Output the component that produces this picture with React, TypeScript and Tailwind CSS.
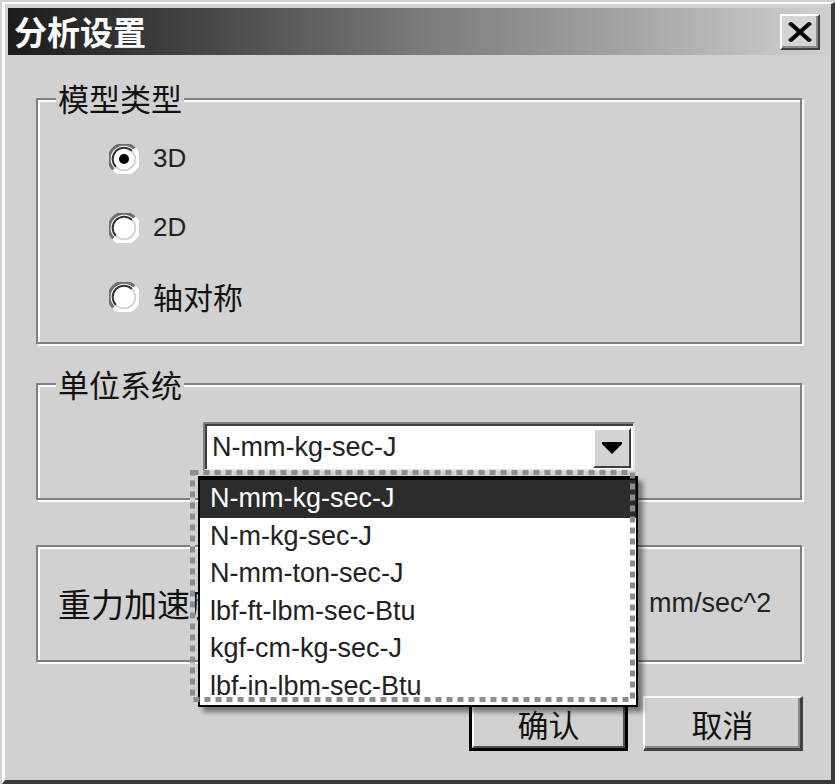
import React from "react";

const CJK = "font-['Noto_Sans_CJK_SC','Noto_Sans',sans-serif]";
const LAT = "font-['Liberation_Sans','Noto_Sans_CJK_SC',sans-serif]";

function Radio({ checked }: { checked?: boolean }) {
  return (
    <svg width="30" height="30" viewBox="0 0 30 30" className="shrink-0">
      <circle cx="15" cy="15" r="14" fill="#ffffff" />
      <path d="M4.5 25.5 A14 14 0 0 1 25.5 4.5" fill="none" stroke="#6e6e6e" strokeWidth="3" />
      <path d="M7 23 A11 11 0 0 1 23 7" fill="none" stroke="#333333" strokeWidth="2" />
      <path d="M25.5 4.5 A14 14 0 0 1 4.5 25.5" fill="none" stroke="#ffffff" strokeWidth="3" />
      <path d="M23 7 A11 11 0 0 1 7 23" fill="none" stroke="#d6d6d6" strokeWidth="2" />
      {checked && <circle cx="15" cy="15" r="5" fill="#000" />}
    </svg>
  );
}

const items = [
  "N-mm-kg-sec-J",
  "N-m-kg-sec-J",
  "N-mm-ton-sec-J",
  "lbf-ft-lbm-sec-Btu",
  "kgf-cm-kg-sec-J",
  "lbf-in-lbm-sec-Btu",
];

export default function App() {
  return (
    <div className="relative w-[835px] h-[784px] bg-[#d1d1d1] pl-[2px] pt-[2px] overflow-hidden">
      <div className="h-[782px] flex flex-col border-t-2 border-l-[3px] border-t-white border-l-white border-r-4 border-b-4 border-r-[#3a3a3a] border-b-[#3a3a3a] pl-[3px] pt-[4px] pr-[4px]">
        {/* title bar */}
        <div className="h-[47px] flex items-center justify-between bg-gradient-to-r from-[#1c1c1c] via-[#7a7a7a] to-[#cfcfcf] pl-[6px] pr-[7px]">
          <span className={`${CJK} text-white font-bold text-[33px] leading-none`}>分析设置</span>
          <div className="w-[40px] h-[36px] bg-[#d4d4d4] border-t-2 border-l-2 border-t-white border-l-white border-r-2 border-b-2 border-r-[#404040] border-b-[#404040] shadow-[inset_-2px_-2px_0_#8a8a8a] flex items-center justify-center">
            <svg width="24" height="20" viewBox="0 0 24 20">
              <path d="M3 2 L21 18 M21 2 L3 18" stroke="#000" strokeWidth="4" strokeLinecap="square" />
            </svg>
          </div>
        </div>

        {/* group 1 */}
        <div className="relative ml-[28px] mt-[43px] w-[766px] h-[246px] border-2 border-[#808080] shadow-[inset_2px_2px_0_#ffffff,2px_2px_0_#ffffff] pl-[71px] pt-[24px]">
          <span className={`absolute left-[18px] top-[-18px] px-[2px] bg-[#d1d1d1] ${CJK} text-[31px] leading-[31px] text-[#111]`}>模型类型</span>
          <div className="flex flex-col">
            <div className="h-[69px] flex items-center gap-[14px]">
              <Radio checked />
              <span className={`${LAT} text-[26px] text-[#222]`}>3D</span>
            </div>
            <div className="h-[69px] flex items-center gap-[14px]">
              <Radio />
              <span className={`${LAT} text-[26px] text-[#222]`}>2D</span>
            </div>
            <div className="h-[69px] flex items-center gap-[14px]">
              <Radio />
              <span className={`${CJK} text-[30px] text-[#111]`}>轴对称</span>
            </div>
          </div>
        </div>

        {/* group 2 */}
        <div className="relative ml-[28px] mt-[39px] w-[766px] h-[117px] border-2 border-[#808080] shadow-[inset_2px_2px_0_#ffffff,2px_2px_0_#ffffff] pl-[165px] pt-[37px]">
          <span className={`absolute left-[18px] top-[-17px] px-[2px] bg-[#d1d1d1] ${CJK} text-[31px] leading-[31px] text-[#111]`}>单位系统</span>
          <div className="w-[432px] h-[49px] bg-white border-t-2 border-l-2 border-t-[#808080] border-l-[#808080] border-r-2 border-b-2 border-r-[#e8e8e8] border-b-[#e8e8e8] shadow-[inset_2px_2px_0_#404040] flex items-center justify-between pl-[7px] pr-[2px] pt-[2px]">
            <span className={`${LAT} text-[27px] text-[#222] leading-none`}>N-mm-kg-sec-J</span>
            <div className="w-[38px] h-[40px] bg-[#d4d4d4] border-t-2 border-l-2 border-t-white border-l-white border-r-2 border-b-2 border-r-[#404040] border-b-[#404040] flex items-center justify-center">
              <svg width="20" height="12" viewBox="0 0 20 12">
                <path d="M0 0 H20 V2 L10 12 L0 2 Z" fill="#000" />
              </svg>
            </div>
          </div>
        </div>

        {/* group 3 */}
        <div className="ml-[28px] mt-[45px] w-[766px] h-[117px] border-2 border-[#808080] shadow-[inset_2px_2px_0_#ffffff,2px_2px_0_#ffffff] pl-[20px] flex items-center">
          <span className={`${CJK} text-[33px] text-[#111] w-[591px] leading-none`}>重力加速度</span>
          <span className={`${LAT} text-[27px] text-[#222] leading-none`}>mm/sec^2</span>
        </div>

        {/* buttons */}
        <div className="mt-[34px] mr-[24px] flex justify-end gap-[15px]">
          <div className="w-[159px] h-[55px] border-[3px] border-black">
            <div className="w-full h-full bg-[#d1d1d1] border-t-2 border-l-2 border-t-white border-l-white border-r-2 border-b-2 border-r-[#505050] border-b-[#505050] flex items-center justify-center">
              <span className={`${CJK} text-[31px] text-[#111] leading-none`}>确认</span>
            </div>
          </div>
          <div className="w-[160px] h-[55px] bg-[#d1d1d1] border-t-2 border-l-2 border-t-white border-l-white border-r-[3px] border-b-[3px] border-r-[#404040] border-b-[#404040] shadow-[inset_-2px_-2px_0_#8a8a8a] flex items-center justify-center">
            <span className={`${CJK} text-[31px] text-[#111] leading-none`}>取消</span>
          </div>
        </div>
      </div>

      {/* dropdown list */}
      <div className="absolute left-[198px] top-[476px] w-[440px] h-[231px] bg-white border-2 border-t-4 border-black shadow-[5px_5px_5px_rgba(0,0,0,0.45)] flex flex-col">
        {items.map((t, i) => (
          <div
            key={t}
            className={`h-[37.5px] flex items-center pl-[10px] ${LAT} text-[27px] leading-none ${i === 0 ? "bg-[#2c2c2c] text-white" : "text-[#222]"}`}
          >
            {t}
          </div>
        ))}
      </div>

      {/* focus dotted rectangle */}
      <svg className="absolute left-[190px] top-[470px] pointer-events-none" width="446" height="232" viewBox="0 0 446 232">
        <path d="M2.5 229.5 V2.5" stroke="#d1d1d1" strokeWidth="5" fill="none" />
        <rect x="2.5" y="2.5" width="440" height="227" fill="none" stroke="#8c8c8c" strokeWidth="5" strokeDasharray="6 5" />
      </svg>
    </div>
  );
}
